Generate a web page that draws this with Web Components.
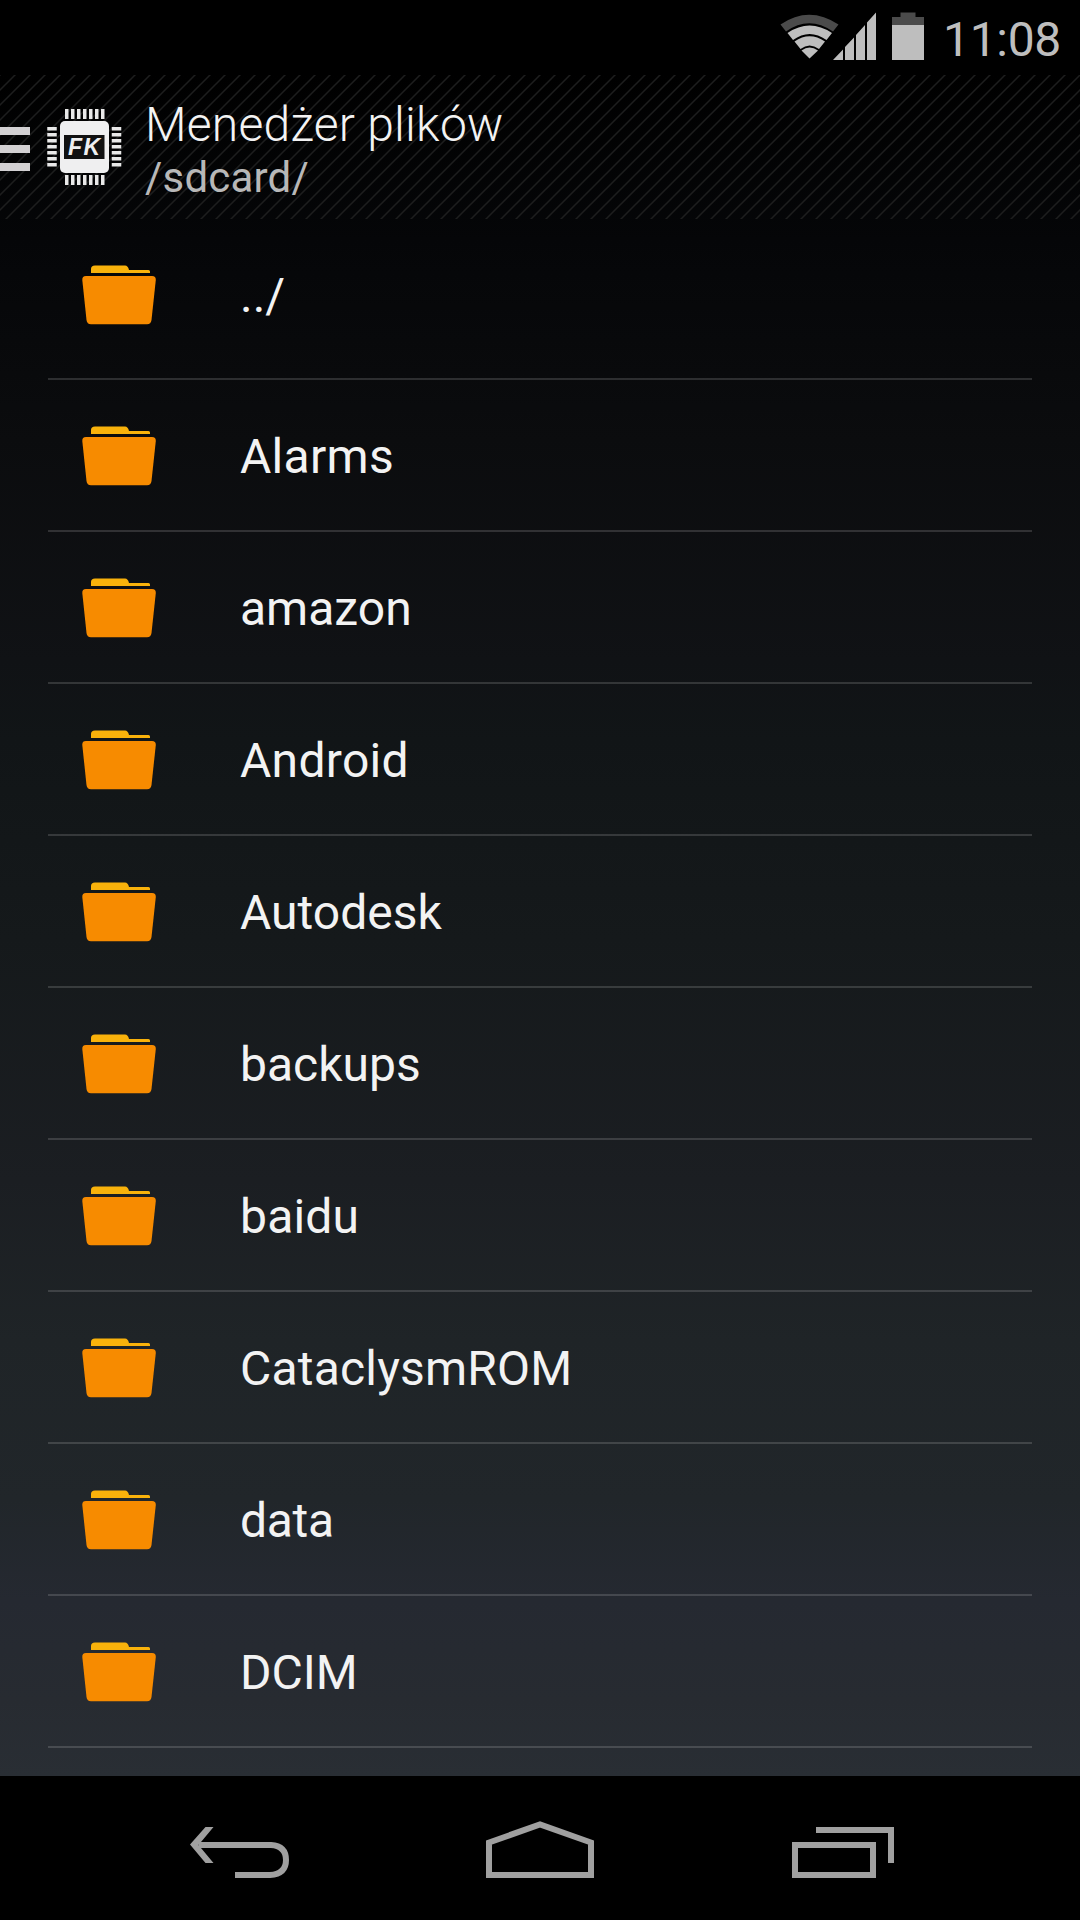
<!DOCTYPE html>
<html lang="pl">
<head>
<meta charset="utf-8">
<title>Menedżer plików</title>
<style>
  body {
    margin: 0;
    background: #000;
  }
</style>
</head>
<body>
<file-manager></file-manager>

<script>
const FOLDERS = ['../', 'Alarms', 'amazon', 'Android', 'Autodesk', 'backups', 'baidu', 'CataclysmROM', 'data', 'DCIM'];

const SPACING = {Alarms: 0.3, Android: 0.3, CataclysmROM: 0.2, baidu: 0.2, data: -0.3};

function define(name, html) {
  customElements.define(name, class extends HTMLElement {
    constructor() {
      super();
      this.attachShadow({mode: 'open'});
    }
    connectedCallback() {
      this.shadowRoot.innerHTML = html;
    }
  });
}

define('status-bar', `
  <style>
    :host {
      display: flex;
      justify-content: flex-end;
      height: 75px;
      background: #000;
      color: #bebebe;
    }
    svg { display: block; }
    .clock {
      width: 154px;
      padding-left: 17px;
      box-sizing: border-box;
      font-size: 48px;
      line-height: 79px;
      letter-spacing: -.3px;
      white-space: nowrap;
    }
  </style>
  <svg width="156" height="75" viewBox="770 0 156 75">
    <g fill="#bebebe">
      <path fill="#4b4b4b" d="M780.5 24.5Q809 5 838.5 24.5L833 31.500Q809 15 786 31.500Z"/>
      <path d="M787.500 33Q809.500 18 832 33L826.500 40Q809.500 28 793 40Z"/>
      <path d="M794.500 41.500Q809.500 31 825 41.500L819 49Q809.500 42 800.500 49Z"/>
      <path d="M801.500 50.500Q809.500 44.500 818 50.500L809.500 58.500Z"/>
      <path d="M833 60L843 49.500V60ZM845 60V47L854 37.500V60ZM856 60V35L865 25V60ZM867 60V22.500L876 12.500V60Z"/>
      <path d="M892 25H924V60H892Z"/>
      <path fill="#4b4b4b" d="M892 17H900.500V12.500H915.500V17H924V25H892Z"/>
    </g>
  </svg>
  <div class="clock"><slot></slot></div>
`);

define('chip-logo', `
  <style>
    :host { display: block; width: 75px; height: 77px; }
    svg { display: block; }
    text { font: italic 700 23px "Liberation Sans", sans-serif; }
  </style>
  <svg width="75" height="77" viewBox="47 108 75 77">
    <g stroke="#e9e9e9" fill="none">
      <path stroke-width="10" stroke-dasharray="3.500 2.500" d="M65 114H105M65 180H105"/>
      <path stroke-width="9.500" stroke-dasharray="3.500 2.500" d="M52 127V167M116.500 127V167"/>
    </g>
    <rect x="60" y="121" width="49" height="52" rx="5" fill="#efeff0"/>
    <rect x="64" y="135" width="40.500" height="24" fill="#111"/>
    <text x="68" y="154.500" fill="#efeff0" textLength="32">FK</text>
  </svg>
`);

define('action-bar', `
  <style>
    :host {
      display: flex;
      height: 144px;
      position: relative;
    }
    .stripes { position: absolute; inset: 0; }
    .menu, chip-logo, .texts { position: relative; }
    .menu {
      display: flex;
      flex-direction: column;
      gap: 10px;
      width: 30px;
      padding-top: 52px;
    }
    .menu i { height: 8px; background: #d2d0d2; }
    chip-logo { margin: 33px 23px 0 17px; }
    .texts { padding-top: 22px; }
    .title {
      font-size: 48px;
      font-weight: 300;
      line-height: 56px;
      letter-spacing: .25px;
      color: #f3f3f3;
      white-space: nowrap;
    }
    .path {
      font-size: 42px;
      line-height: 50px;
      letter-spacing: .2px;
      color: #b8b8b8;
    }
  </style>
  <svg class="stripes" width="1080" height="144">
    <pattern id="p" width="15" height="15" x="6" y="9" patternUnits="userSpaceOnUse">
      <path d="M-2 17L17 -2M-2 2L2 -2M13 17L17 13" stroke="#1d1e1e" stroke-width="1.500"/>
    </pattern>
    <rect width="1080" height="144" fill="url(#p)"/>
  </svg>
  <div class="menu"><i></i><i></i><i></i></div>
  <chip-logo></chip-logo>
  <div class="texts">
    <div class="title"><slot name="title"></slot></div>
    <div class="path"><slot name="path"></slot></div>
  </div>
`);

define('folder-icon', `
  <style>
    :host { display: block; width: 74px; height: 60px; }
    svg { display: block; }
  </style>
  <svg width="74" height="60" viewBox="0 0 74 60">
    <path fill="#f9b20b" d="M9 8V4Q9 0.500 13 0.500H43Q46 0.500 47 5H66.500Q68 5 68 6.500V8Z"/>
    <path fill="#f78b00" d="M4 11H70Q74 11 73.800 15L69.500 55Q69 59.200 65 59.200H9Q5 59.200 4.500 55L0.300 15Q0 11 4 11Z"/>
  </svg>
`);

define('folder-row', `
  <style>
    :host {
      display: flex;
      align-items: center;
      height: 150px;
      padding-left: 34px;
      border-bottom: 2px solid rgba(255, 255, 255, .15);
      font-size: 48px;
      color: #f3f3f3;
    }
    :host(:first-child) {
      height: 148px;
      padding-bottom: 10px;
    }
    folder-icon { margin: 2px 84px 0 0; }
    div { padding-top: 3px; white-space: nowrap; }
  </style>
  <folder-icon></folder-icon>
  <div><slot></slot></div>
`);

define('nav-bar', `
  <style>
    :host {
      display: flex;
      justify-content: center;
      gap: 90px;
      height: 144px;
      background: #000;
    }
    svg { display: block; }
    path { fill: none; stroke: #a0a0a0; stroke-width: 6; }
  </style>
  <svg width="200" height="144" viewBox="150 1776 200 144">
    <path d="M199 1845H271Q286 1846 286 1860Q286 1874 270 1875H235"/>
    <path style="fill:#a0a0a0;stroke:none" d="M190 1844.500L205.500 1827H213.500L198.500 1845L213.500 1863H205.500Z"/>
  </svg>
  <svg width="200" height="144" viewBox="440 1776 200 144">
    <path d="M489 1875V1842.500L540 1824.500L591 1842.500V1875Z"/>
  </svg>
  <svg width="200" height="144" viewBox="730 1776 200 144">
    <path d="M795 1845H873V1875H795ZM816 1830H891V1863"/>
  </svg>
`);

customElements.define('file-manager', class extends HTMLElement {
  constructor() {
    super();
    this.attachShadow({mode: 'open'});
  }
  connectedCallback() {
    let rows = FOLDERS.map(name =>
      `<folder-row><span style="letter-spacing: ${SPACING[name] || 0}px">${name}</span></folder-row>`).join('');
    this.shadowRoot.innerHTML = `
      <style>
        :host {
          display: flex;
          flex-direction: column;
          height: 1920px;
          overflow: hidden;
          font-family: Roboto, sans-serif;
          background: linear-gradient(#000 75px, #050608 240px, #0b0c0e 440px, #101215 660px, #111517 740px, #15191b 940px, #1b1e22 1180px, #1f2427 1340px, #21262a 1500px, #252931 1600px, #272b31 1700px, #292e34 1776px);
        }
        main { flex: 1; padding: 1px 48px 0; }
      </style>
      <status-bar><span>11:08</span></status-bar>
      <action-bar>
        <span slot="title">Menedżer plików</span>
        <span slot="path">/sdcard/</span>
      </action-bar>
      <main>${rows}</main>
      <nav-bar></nav-bar>`;
  }
});
</script>
</body>
</html>
